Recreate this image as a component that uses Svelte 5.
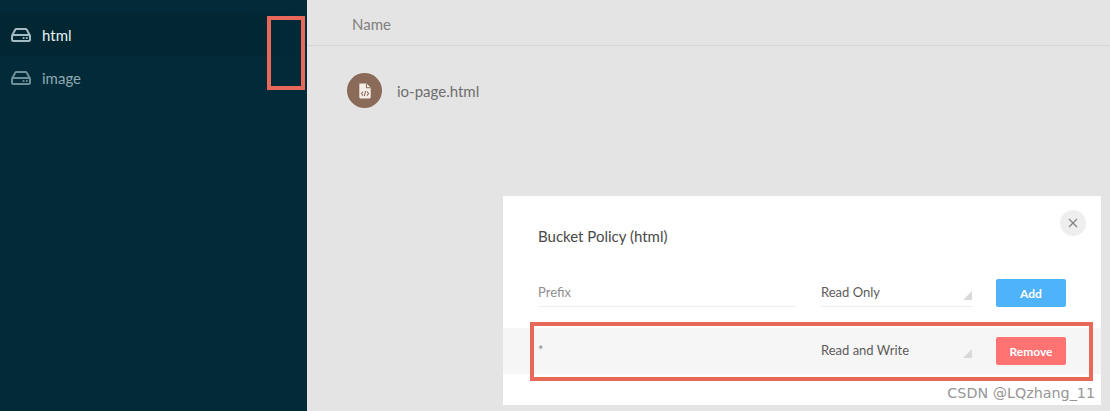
<script lang="ts">
	const buckets = [
		{ name: 'html', active: true },
		{ name: 'image', active: false }
	];
</script>

<div class="page">
	<aside class="sidebar">
		{#each buckets as bucket}
			<div class="bucket" class:active={bucket.active}>
				<svg class="disk" viewBox="0 0 20 14" width="20" height="14" fill="none" stroke="currentColor">
					<path d="M1.1 7.5 L4.2 1.8 Q4.6 1.1 5.4 1.1 H14.6 Q15.4 1.1 15.8 1.8 L18.9 7.5" stroke-width="2" />
					<rect x="1" y="7" width="18" height="6" rx="1.5" stroke-width="2" />
					<circle cx="12.6" cy="10" r="1.1" fill="currentColor" stroke="none" />
					<circle cx="15.8" cy="10" r="1.1" fill="currentColor" stroke="none" />
				</svg>
				<span>{bucket.name}</span>
			</div>
		{/each}
	</aside>

	<main class="content">
		<div class="list-head">Name</div>
		<div class="file">
			<div class="file-icon">
				<svg viewBox="0 0 12 14" width="14" height="16">
					<path d="M1.5 0.5 H7.5 L11 4 V12.5 Q11 13.5 10 13.5 H2 Q1 13.5 1 12.5 V1.5 Q1 0.5 1.5 0.5 Z" fill="#f4ede8" />
					<path d="M7.3 0.5 V4.2 H11" fill="none" stroke="#8a6a58" stroke-width="0.9" />
					<path d="M4.3 7.4 L2.9 9.2 L4.3 11 M7.7 7.4 L9.1 9.2 L7.7 11 M6.6 7 L5.4 11.4" fill="none" stroke="#8a6a58" stroke-width="0.9" />
				</svg>
			</div>
			<span>io-page.html</span>
		</div>
	</main>

	<section class="modal">
		<button class="close" aria-label="Close">
			<svg viewBox="0 0 10 10" width="10" height="10" fill="none" stroke="#7f7f7f" stroke-width="1.1">
				<path d="M1 1 L9 9 M9 1 L1 9" />
			</svg>
		</button>
		<h2>Bucket Policy (html)</h2>
		<div class="row">
			<div class="field prefix placeholder">Prefix</div>
			<div class="field select">Read Only</div>
			<button class="btn add">Add</button>
		</div>
		<div class="row existing">
			<div class="field prefix plain placeholder">*</div>
			<div class="field select plain">Read and Write</div>
			<button class="btn remove">Remove</button>
		</div>
		<div class="watermark">CSDN @LQzhang_11</div>
	</section>

	<!-- red annotation boxes drawn over the screenshot -->
	<div class="mark mark-side"></div>
	<div class="mark mark-row"></div>
</div>

<style>
	:global(body) {
		margin: 0;
	}

	.page {
		position: relative;
		display: flex;
		width: 1110px;
		height: 411px;
		overflow: hidden;
		background: #e4e4e4;
		font-family: Lato, 'Open Sans', sans-serif;
	}

	.sidebar {
		flex: 0 0 307px;
		box-sizing: border-box;
		padding-top: 13px;
		background: #022a38;
	}

	.bucket {
		display: flex;
		align-items: center;
		gap: 11px;
		height: 43px;
		padding-left: 11px;
		font-size: 15px;
		color: #8fa9b1;
	}

	.bucket.active {
		color: #e6f0f4;
		background: linear-gradient(to right, #022632, #022632 75%, #022a38);
	}

	.disk {
		color: #6f8f98;
	}

	.bucket.active .disk {
		color: #a3bbc3;
	}

	.content {
		flex: 1;
	}

	.list-head {
		box-sizing: border-box;
		height: 46px;
		padding: 15px 0 0 45px;
		border-bottom: 1px solid #d6d6d6;
		font-size: 15px;
		line-height: 18px;
		color: #7f7f7f;
	}

	.file {
		display: flex;
		align-items: center;
		gap: 15px;
		padding: 27px 0 0 40px;
		font-size: 15px;
		color: #6e6e6e;
	}

	.file-icon {
		display: flex;
		align-items: center;
		justify-content: center;
		width: 35px;
		height: 35px;
		border-radius: 50%;
		background: #8a6a58;
	}

	.modal {
		position: absolute;
		left: 503px;
		top: 196px;
		width: 598px;
		height: 209px;
		box-sizing: border-box;
		padding-top: 31px;
		background: #fff;
	}

	.close {
		position: absolute;
		top: 14px;
		right: 15px;
		display: flex;
		align-items: center;
		justify-content: center;
		width: 26px;
		height: 26px;
		padding: 0;
		border: 0;
		border-radius: 50%;
		background: #eeeeee;
	}

	h2 {
		margin: 0 0 25px 35px;
		font-size: 15px;
		font-weight: 400;
		line-height: 18px;
		color: #4a4a4a;
	}

	.row {
		display: flex;
		align-items: center;
		height: 46px;
		box-sizing: border-box;
		padding-left: 35px;
	}

	.row + .row {
		margin-top: 12px;
	}

	.existing {
		background: #f6f6f6;
	}

	.field {
		box-sizing: border-box;
		height: 28px;
		line-height: 27px;
		font-size: 13px;
		color: #5c5c5c;
		border-bottom: 1px solid #eeeeee;
	}

	.field.plain {
		border-bottom-color: transparent;
	}

	.prefix {
		width: 258px;
	}

	.placeholder {
		color: #8e8e8e;
	}

	.select {
		position: relative;
		width: 152px;
		margin-left: 25px;
	}

	.select::after {
		content: '';
		position: absolute;
		right: 1px;
		bottom: 6px;
		border-style: solid;
		border-width: 0 0 9px 9px;
		border-color: transparent transparent #d9d9d9 transparent;
	}

	.btn {
		width: 70px;
		height: 28px;
		margin-left: 23px;
		padding: 0;
		border: 0;
		border-radius: 2px;
		font-family: inherit;
		font-size: 12px;
		font-weight: 700;
		color: #fff;
	}

	.add {
		background: #4fb3fa;
	}

	.remove {
		background: #ff7373;
	}

	.watermark {
		position: absolute;
		right: 6px;
		bottom: 4px;
		font-family: 'DejaVu Sans', sans-serif;
		font-size: 14.3px;
		line-height: 16px;
		color: #969696;
	}

	.mark {
		position: absolute;
		box-sizing: border-box;
		border: 4px solid #e8695a;
	}

	.mark-side {
		left: 267px;
		top: 16px;
		width: 38px;
		height: 74px;
	}

	.mark-row {
		left: 530px;
		top: 322px;
		width: 563px;
		height: 59px;
	}
</style>
